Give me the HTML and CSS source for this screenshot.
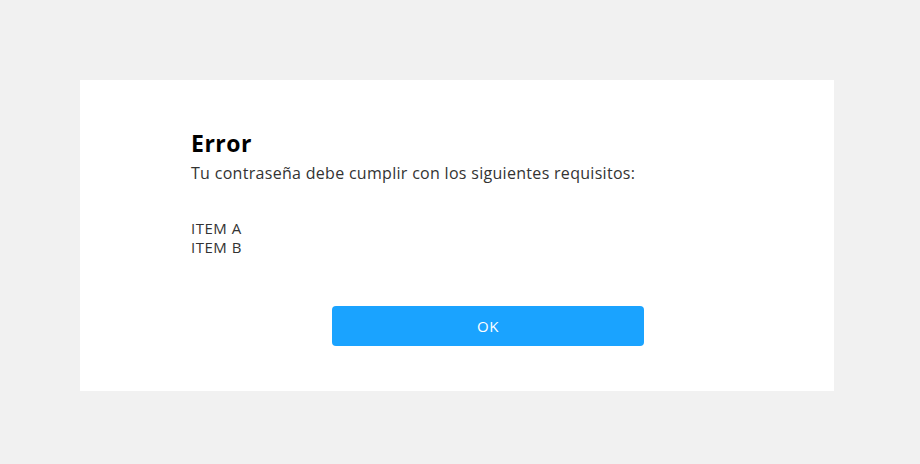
FILE: index.html
```html
<!DOCTYPE html>
<html lang="es">
<head>
<meta charset="utf-8">
<link rel="stylesheet" href="styles.css">
</head>
<body>
<div class="page">
  <div class="card">
    <h1 class="title">Error</h1>
    <p class="subtitle">Tu contraseña debe cumplir con los siguientes requisitos:</p>
    <ul class="items">
      <li>ITEM A</li>
      <li>ITEM B</li>
    </ul>
    <button class="ok">OK</button>
  </div>
</div>
</body>
</html>
```

FILE: styles.css
```css
html, body {
  margin: 0;
  padding: 0;
  background: #f1f1f1;
}
.page {
  width: 920px;
  height: 464px;
  padding: 80px 0 0 80px;
  box-sizing: border-box;
}
.card {
  width: 754px;
  height: 311px;
  background: #ffffff;
  box-sizing: border-box;
  padding: 48px 0 0 111px;
  display: flex;
  flex-direction: column;
  align-items: flex-start;
  font-family: "Open Sans", sans-serif;
  color: #222;
}
.card > * {
  flex-shrink: 0;
}
.title {
  margin: 0;
  font-size: 23px;
  line-height: 30px;
  font-weight: 700;
  letter-spacing: 0.5px;
  color: #000;
}
.subtitle {
  margin: 5px 0 0 0;
  font-size: 16px;
  line-height: 20px;
  letter-spacing: 0.3px;
  color: #333;
}
.items {
  list-style: none;
  margin: 36px 0 0 0;
  padding: 0;
  font-size: 15px;
  line-height: 19px;
  letter-spacing: 0.5px;
  color: #333;
}
.ok {
  margin: 49px 0 0 141px;
  width: 312px;
  height: 40px;
  padding: 0;
  border: none;
  border-radius: 4px;
  background: #1aa3ff;
  color: #fff;
  font-family: "Open Sans", sans-serif;
  font-size: 15px;
  letter-spacing: 0.5px;
}
```
